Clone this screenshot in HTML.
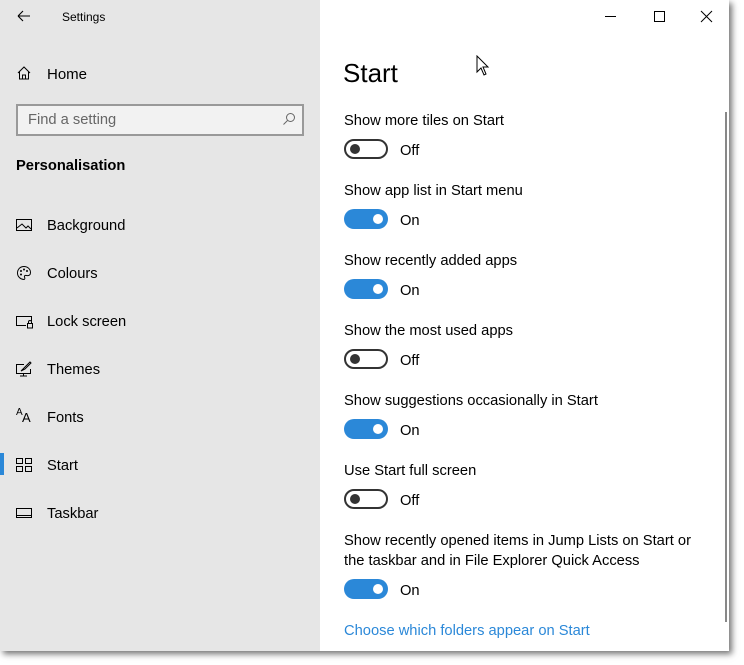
<!DOCTYPE html>
<html><head><meta charset="utf-8"><style>
*{margin:0;padding:0;box-sizing:border-box}
body{width:744px;height:665px;background:#fff;font-family:"Liberation Sans",sans-serif;position:relative;overflow:hidden;color:#000}
#win{position:absolute;left:0;top:0;width:729px;height:651px;box-shadow:3px 3px 6px rgba(0,0,0,.55);background:#fff}
#side{position:absolute;left:0;top:0;width:320px;height:651px;background:#e6e6e6}
.t{position:absolute;white-space:nowrap}
.nav{position:absolute;left:16px;font-size:14.7px}
.nav svg{position:absolute;left:0;top:0}
.nav span{position:absolute;left:31px;top:1px;white-space:nowrap}
.lbl{position:absolute;left:344px;font-size:14.7px;white-space:nowrap}
.tg{position:absolute;left:344px;width:44px;height:20px;border-radius:10px}
.off{border:2px solid #333;background:#fff}
.off:after{content:"";position:absolute;left:4px;top:3px;width:10px;height:10px;border-radius:50%;background:#333}
.on{background:#2b88d8}
.on:after{content:"";position:absolute;right:5px;top:5px;width:10px;height:10px;border-radius:50%;background:#fff}
.st{position:absolute;left:400px;font-size:14.7px}
</style></head><body>
<div id="win">
<div id="side">
<svg class="t" style="left:17px;top:10px" width="14" height="12"><path d="M1 6H13M1 6L6 1M1 6L6 11" stroke="#000" fill="none" stroke-width="1.1"/></svg>
<div class="t" style="left:62px;top:10px;font-size:12px">Settings</div>
<div class="nav" style="top:65px"><svg width="16" height="16"><path d="M2 8L8 2L14 8M3.5 6.5V14H12.5V6.5M6.5 14V10H9.5V14" stroke="#000" fill="none"/></svg><span style="font-size:15px">Home</span></div>
<div class="t" style="left:16px;top:104px;width:288px;height:32px;border:2px solid #999;background:#f2f2f2"></div>
<div class="t" style="left:28px;top:112px;font-size:14.7px;color:#666">Find a setting</div>
<svg class="t" style="left:282px;top:112px" width="14" height="14"><circle cx="8.5" cy="5.5" r="4" stroke="#666" fill="none"/><path d="M5.5 8.5L1.5 12.5" stroke="#666"/></svg>
<div class="t" style="left:16px;top:158px;font-size:14.7px;font-weight:bold">Personalisation</div>
<div class="nav" style="top:217px"><svg width="16" height="16"><rect x="0.5" y="2.5" width="15" height="11" stroke="#000" fill="none"/><path d="M1 11L6 7L10 11L12 9L15 12" stroke="#000" fill="none"/></svg><span>Background</span></div>
<div class="nav" style="top:265px"><svg width="16" height="16"><path d="M8 1.5C4 1.5 1.5 4.5 1.5 8C1.5 12 5 14.5 8 14.5C9 14.5 9 13 8.5 12C8 11 9 10 10.5 10.5C13 11 14.5 10 14.5 7.5C14.5 4 11.5 1.5 8 1.5Z" stroke="#000" fill="none"/><circle cx="5" cy="6" r="1" fill="#000"/><circle cx="8" cy="4.5" r="1" fill="#000"/><circle cx="11" cy="6" r="1" fill="#000"/><circle cx="5" cy="9.5" r="1" fill="#000"/></svg><span>Colours</span></div>
<div class="nav" style="top:313px"><svg width="18" height="16"><path d="M10 12.5H0.5V3.5H15.5V8" stroke="#000" fill="none"/><rect x="11.5" y="10.5" width="5" height="4.5" stroke="#000" fill="none"/><path d="M12.5 10.5V9A1.5 1.5 0 0 1 15.5 9V10.5" stroke="#000" fill="none"/></svg><span>Lock screen</span></div>
<div class="nav" style="top:361px"><svg width="16" height="16"><path d="M8 3.5H0.5V12.5H14.5V8M7.5 12.5V15M4 15H11" stroke="#000" fill="none"/><path d="M5 10L8 7L14 1L15 2L9 8Z" stroke="#000" fill="none"/></svg><span>Themes</span></div>
<div class="nav" style="top:409px"><span style="left:0;top:-2px;font-size:10px">A</span><span style="left:6px;top:1px;font-size:13px">A</span><span>Fonts</span></div>
<div class="t" style="left:0;top:453px;width:4px;height:22px;background:#2b88d8"></div>
<div class="nav" style="top:457px"><svg width="16" height="16"><rect x="0.5" y="1.5" width="6" height="5" stroke="#000" fill="none"/><rect x="9.5" y="1.5" width="6" height="5" stroke="#000" fill="none"/><rect x="0.5" y="9.5" width="6" height="5" stroke="#000" fill="none"/><rect x="9.5" y="9.5" width="6" height="5" stroke="#000" fill="none"/></svg><span>Start</span></div>
<div class="nav" style="top:505px"><svg width="16" height="16"><rect x="0.5" y="3.5" width="15" height="9" stroke="#000" fill="none"/><path d="M1 10.5H15" stroke="#000"/></svg><span>Taskbar</span></div>
</div>
<svg class="t" style="left:605px;top:10px" width="120" height="14"><path d="M0 6.5H11" stroke="#000"/><rect x="49.5" y="1.5" width="10" height="10" stroke="#000" fill="none"/><path d="M96 1L107 12M107 1L96 12" stroke="#000"/></svg>
<div class="t" style="left:725px;top:112px;width:2px;height:510px;background:#888"></div>
<svg class="t" style="left:476px;top:55px" width="14" height="22"><path d="M1 1V17L5 13L8 20L10 19L7 12H12Z" fill="#fff" stroke="#000"/></svg>
<div class="t" style="left:343px;top:58px;font-size:26px">Start</div>
<div class="lbl" style="top:113px">Show more tiles on Start</div>
<div class="tg off" style="top:139px"></div><div class="st" style="top:143px">Off</div>
<div class="lbl" style="top:183px">Show app list in Start menu</div>
<div class="tg on" style="top:209px"></div><div class="st" style="top:213px">On</div>
<div class="lbl" style="top:253px">Show recently added apps</div>
<div class="tg on" style="top:279px"></div><div class="st" style="top:283px">On</div>
<div class="lbl" style="top:323px">Show the most used apps</div>
<div class="tg off" style="top:349px"></div><div class="st" style="top:353px">Off</div>
<div class="lbl" style="top:393px">Show suggestions occasionally in Start</div>
<div class="tg on" style="top:419px"></div><div class="st" style="top:423px">On</div>
<div class="lbl" style="top:463px">Use Start full screen</div>
<div class="tg off" style="top:489px"></div><div class="st" style="top:493px">Off</div>
<div class="lbl" style="top:531px;line-height:20px">Show recently opened items in Jump Lists on Start or<br>the taskbar and in File Explorer Quick Access</div>
<div class="tg on" style="top:579px"></div><div class="st" style="top:583px">On</div>
<div class="lbl" style="top:623px;color:#2b88d8">Choose which folders appear on Start</div>
</div>
</body></html>
